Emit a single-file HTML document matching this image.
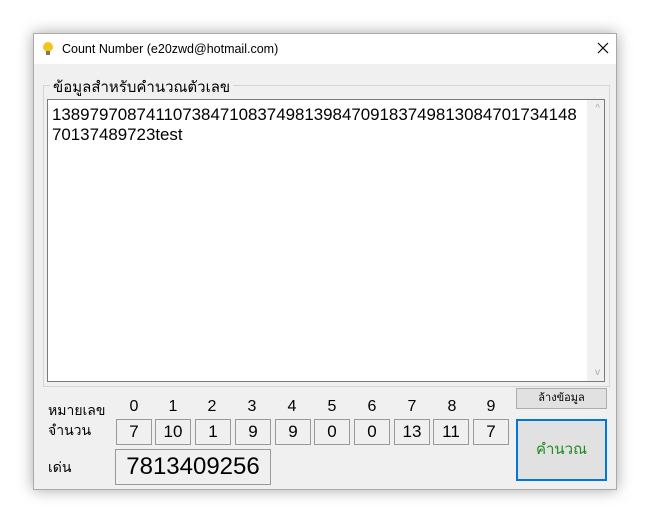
<!DOCTYPE html>
<html><head><style>
body{margin:0;width:650px;height:523px;background:#fff;position:relative;overflow:hidden;font-family:"Liberation Sans","Noto Sans CJK SC",sans-serif}
.win{position:absolute;left:33px;top:33px;width:584px;height:457px;background:#f0f0f0;box-shadow:0 0 14px rgba(0,0,0,.35);border:1px solid #aaa;box-sizing:border-box}
.title{position:absolute;left:0;top:0;right:0;height:30px;background:#fff;font-size:12.5px;color:#000}
.a{position:absolute}
.box{position:absolute;border:1px solid #999;background:#f0f0f0;box-sizing:border-box;text-align:center;font-size:17px;color:#000}
.lbl{position:absolute;font-size:14px;color:#000}
.d{position:absolute;font-size:16px;width:20px;text-align:center;top:364px}
</style></head><body>
<div class="win">
 <div class="title">
  <svg class="a" style="left:8px;top:7px" width="12" height="16" viewBox="0 0 12 16"><circle cx="6" cy="6" r="5" fill="#f5c518"/><rect x="4" y="10" width="4" height="4" fill="#777"/></svg>
  <div class="a" style="left:28px;top:8px">Count Number (e20zwd@hotmail.com)</div>
  <svg class="a" style="left:563px;top:8px" width="12" height="12" viewBox="0 0 12 12"><path d="M1 1L11 11M11 1L1 11" stroke="#000" stroke-width="1.2"/></svg>
 </div>
 <div class="a" style="left:9px;top:51px;width:565px;height:300px;border:1px solid #d5d5d5"></div>
 <div class="lbl" style="left:16px;top:41px;background:#f0f0f0;padding:0 3px;font-size:15px">ข้อมูลสำหรับคำนวณตัวเลข</div>
 <div class="a" style="left:13px;top:65px;width:558px;height:283px;background:#fff;border:1px solid #7a7a7a;box-sizing:border-box">
  <div class="a" style="left:4px;top:5px;font-size:16.9px;line-height:20px;color:#000;white-space:nowrap">13897970874110738471083749813984709183749813084701734148<br>70137489723test</div>
  <div class="a" style="right:0;top:0;width:17px;height:281px;background:#f0f0f0"></div>
  <div class="a" style="right:4px;top:3px;font-size:10px;color:#aaa">^</div>
  <div class="a" style="right:4px;bottom:3px;font-size:10px;color:#aaa">v</div>
 </div>
 <div class="lbl" style="left:14px;top:366px">หมายเลข</div>
 <div class="lbl" style="left:14px;top:386px">จำนวน</div>
 <div class="lbl" style="left:14px;top:423px">เด่น</div>
 <div class="d" style="left:90px">0</div><div class="d" style="left:129px">1</div><div class="d" style="left:168px">2</div><div class="d" style="left:208px">3</div><div class="d" style="left:248px">4</div><div class="d" style="left:288px">5</div><div class="d" style="left:328px">6</div><div class="d" style="left:368px">7</div><div class="d" style="left:408px">8</div><div class="d" style="left:447px">9</div>
 <div class="box" style="left:82px;top:385px;width:36px;height:26px;line-height:24px">7</div>
 <div class="box" style="left:121px;top:385px;width:36px;height:26px;line-height:24px">10</div>
 <div class="box" style="left:161px;top:385px;width:36px;height:26px;line-height:24px">1</div>
 <div class="box" style="left:201px;top:385px;width:36px;height:26px;line-height:24px">9</div>
 <div class="box" style="left:241px;top:385px;width:36px;height:26px;line-height:24px">9</div>
 <div class="box" style="left:280px;top:385px;width:36px;height:26px;line-height:24px">0</div>
 <div class="box" style="left:320px;top:385px;width:36px;height:26px;line-height:24px">0</div>
 <div class="box" style="left:360px;top:385px;width:36px;height:26px;line-height:24px">13</div>
 <div class="box" style="left:399px;top:385px;width:36px;height:26px;line-height:24px">11</div>
 <div class="box" style="left:439px;top:385px;width:36px;height:26px;line-height:24px">7</div>
 <div class="box" style="left:81px;top:415px;width:156px;height:36px;line-height:34px;font-size:24px">7813409256</div>
 <div class="box" style="left:482px;top:354px;width:91px;height:21px;background:#e1e1e1;border-color:#adadad;font-size:11px;line-height:19px">ล้างข้อมูล</div>
 <div class="box" style="left:482px;top:385px;width:91px;height:62px;background:#e1e1e1;border:2px solid #0078d7;font-size:15px;line-height:58px;color:#1e8c1e">คำนวณ</div>
</div>
</body></html>
